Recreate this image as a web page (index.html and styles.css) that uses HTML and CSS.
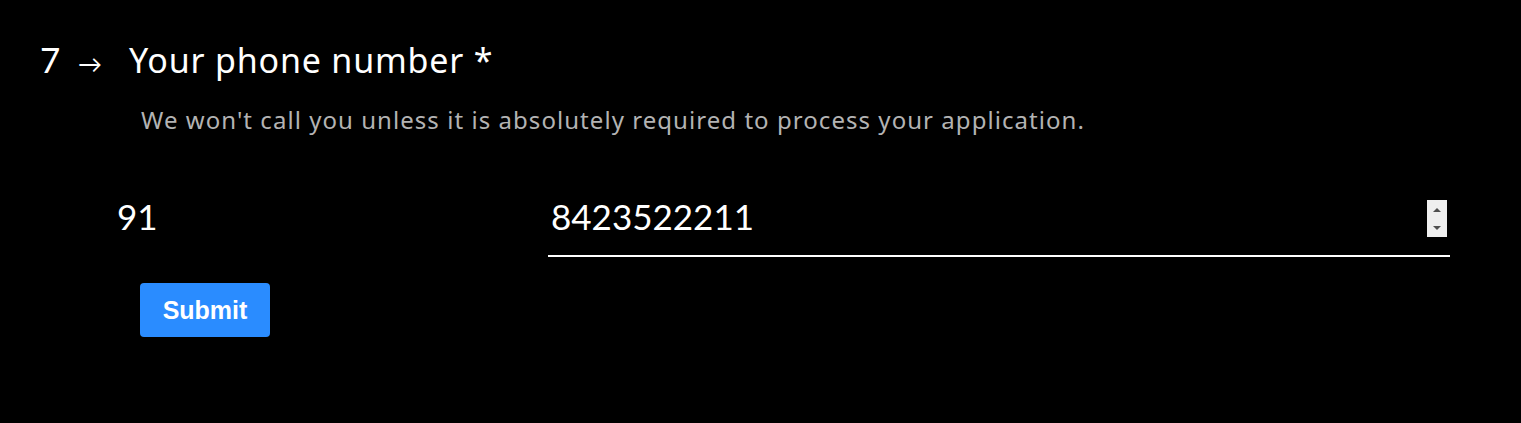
FILE: index.html
```html
<!DOCTYPE html>
<html>
<head>
<meta charset="utf-8">
<link rel="stylesheet" href="styles.css">
</head>
<body>
<main class="question">
  <div class="heading">
    <span class="num">7</span>
    <span class="arrow">→</span>
    <span class="title">Your phone number *</span>
  </div>
  <p class="help">We won't call you unless it is absolutely required to process your application.</p>
  <div class="fields">
    <div class="code">91</div>
    <div class="phone">
      <span class="phone-value">8423522211</span>
      <span class="spinner">
        <svg width="20" height="37" viewBox="0 0 20 37">
          <rect width="20" height="37" fill="#efefef"/>
          <path d="M6 12 L10 8 L14 12 Z" fill="#505050"/>
          <path d="M6 26 L14 26 L10 30 Z" fill="#505050"/>
        </svg>
      </span>
    </div>
  </div>
  <button class="submit">Submit</button>
</main>
</body>
</html>
```
FILE: styles.css
```css
html, body {
  margin: 0;
  background: #000;
}
body {
  font-family: "Noto Sans", "Lato", sans-serif;
  color: #fff;
}
.question {
  padding: 36px 0 0 40px;
}
.heading {
  display: flex;
  align-items: baseline;
  font-size: 34px;
  line-height: 46px;
}
.num {
  width: 38px;
  font-family: "Lato", sans-serif;
  font-size: 35px;
}
.arrow {
  width: 51px;
  font-size: 24px;
}
.title {
  letter-spacing: 0.8px;
}
.help {
  margin: 16px 0 0 101px;
  font-size: 24px;
  line-height: 34px;
  letter-spacing: 1.05px;
  color: #b3b3b3;
}
.fields {
  display: flex;
  margin: 53px 0 0 77px;
  width: 1333px;
  align-items: flex-start;
  font-family: "Lato", sans-serif;
}
.code {
  width: 431px;
  font-size: 35px;
  line-height: 52px;
}
.phone {
  flex: 1;
  display: flex;
  align-items: center;
  justify-content: space-between;
  border-bottom: 2px solid #fff;
  padding: 0 3px 13px 3px;
  height: 52px;
}
.phone-value {
  font-size: 35px;
  line-height: 52px;
}
.spinner {
  display: flex;
  margin-top: 4px;
}
.submit {
  display: block;
  margin: 26px 0 0 100px;
  width: 130px;
  height: 54px;
  border: none;
  border-radius: 4px;
  background: #2a8cff;
  color: #fff;
  font-family: "Liberation Sans", sans-serif;
  font-weight: bold;
  font-size: 25px;
  padding: 0;
}
```
